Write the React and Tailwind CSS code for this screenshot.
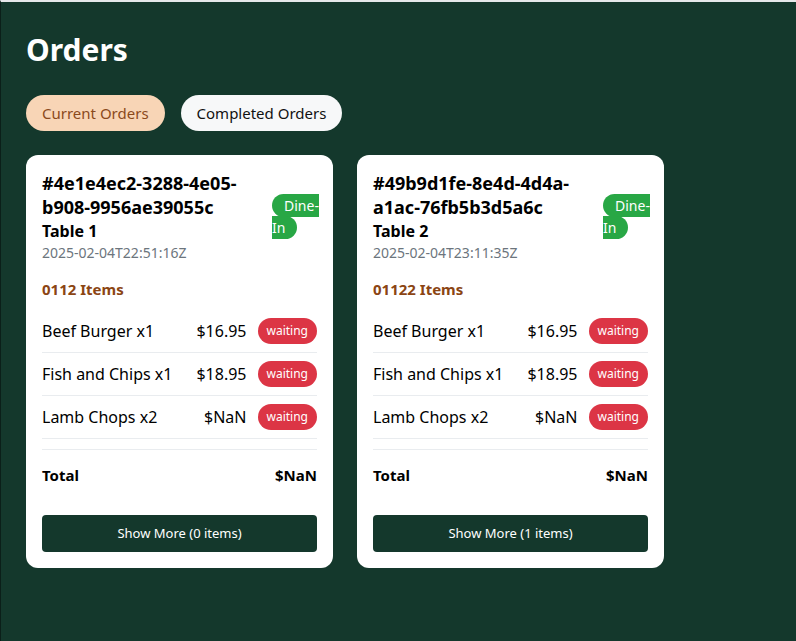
import { useState } from "react";

const orders = [
    {
        id: "4e1e4ec2-3288-4e05-b908-9956ae39055c",
        table: 1,
        time: "2025-02-04T22:51:16Z",
        count: "0112",
        more: 0,
        items: [
            { name: "Beef Burger", qty: 1, price: "$16.95" },
            { name: "Fish and Chips", qty: 1, price: "$18.95" },
            { name: "Lamb Chops", qty: 2, price: "$NaN" },
        ],
    },
    {
        id: "49b9d1fe-8e4d-4d4a-a1ac-76fb5b3d5a6c",
        table: 2,
        time: "2025-02-04T23:11:35Z",
        count: "01122",
        more: 1,
        items: [
            { name: "Beef Burger", qty: 1, price: "$16.95" },
            { name: "Fish and Chips", qty: 1, price: "$18.95" },
            { name: "Lamb Chops", qty: 2, price: "$NaN" },
        ],
    },
];

export default function App() {
    const [tab, setTab] = useState("current");

    return (
        <div
            className="min-h-screen bg-[#14382c] border-t-2 border-t-[#e6e8ea] border-l border-l-[#0b1f19] px-[25px] pt-[28px] pb-10"
            style={{ fontFamily: '"Noto Sans", "Open Sans", sans-serif' }}
        >
            <h1 className="text-[30px] leading-[40px] font-bold text-white">Orders</h1>

            <div className="flex gap-4 mt-[25px]">
                <button
                    onClick={() => setTab("current")}
                    className={
                        tab === "current"
                            ? "h-9 px-4 rounded-full bg-[#f8d5b6] text-[#8b4a1c] text-[15px]"
                            : "h-9 px-4 rounded-full bg-[#f7f8f9] text-[#111] text-[15px]"
                    }
                >
                    Current Orders
                </button>
                <button
                    onClick={() => setTab("completed")}
                    className={
                        tab === "completed"
                            ? "h-9 px-4 rounded-full bg-[#f8d5b6] text-[#8b4a1c] text-[15px]"
                            : "h-9 px-4 rounded-full bg-[#f7f8f9] text-[#111] text-[15px]"
                    }
                >
                    Completed Orders
                </button>
            </div>

            <div className="flex gap-6 mt-6 items-start">
                {orders.map((o) => (
                    <OrderCard key={o.id} order={o} />
                ))}
            </div>
        </div>
    );
}

function OrderCard({ order }) {
    return (
        <div className="w-[307px] bg-white rounded-xl p-4 text-black">
            <div className="flex items-center justify-between gap-2">
                <div className="w-[222px]">
                    <div className="text-[18px] leading-6 font-bold break-words">#{order.id}</div>
                    <div className="text-[16px] leading-6 font-bold">Table {order.table}</div>
                    <div className="text-[14px] leading-5 text-[#6c757d]">{order.time}</div>
                </div>
                <div className="w-[45px] shrink-0 text-[14px] leading-[22px] text-white">
                    <span className="bg-[#28a745] rounded-full px-3 py-[2px]">Dine-In</span>
                </div>
            </div>

            <div className="mt-[14px] mb-[9px] text-[15px] leading-6 font-bold text-[#8b4513]">
                {order.count} Items
            </div>

            <ul>
                {order.items.map((it) => (
                    <li
                        key={it.name}
                        className="flex items-center justify-between py-2 border-b border-[#e9ecef] text-[16px]"
                    >
                        <span>
                            {it.name} x{it.qty}
                        </span>
                        <span className="flex items-center gap-[11px]">
                            <span>{it.price}</span>
                            <span className="h-[26px] px-[9px] rounded-full bg-[#dc3545] text-white text-[12px] flex items-center">
                                waiting
                            </span>
                        </span>
                    </li>
                ))}
            </ul>

            <div className="mt-[10px] border-t border-[#e9ecef] pt-[13px] flex justify-between text-[15px] leading-6 font-bold">
                <span>Total</span>
                <span>$NaN</span>
            </div>

            <button className="mt-[28px] w-full h-[37px] rounded bg-[#14382c] text-white text-[13px]">
                Show More ({order.more} items)
            </button>
        </div>
    );
}
